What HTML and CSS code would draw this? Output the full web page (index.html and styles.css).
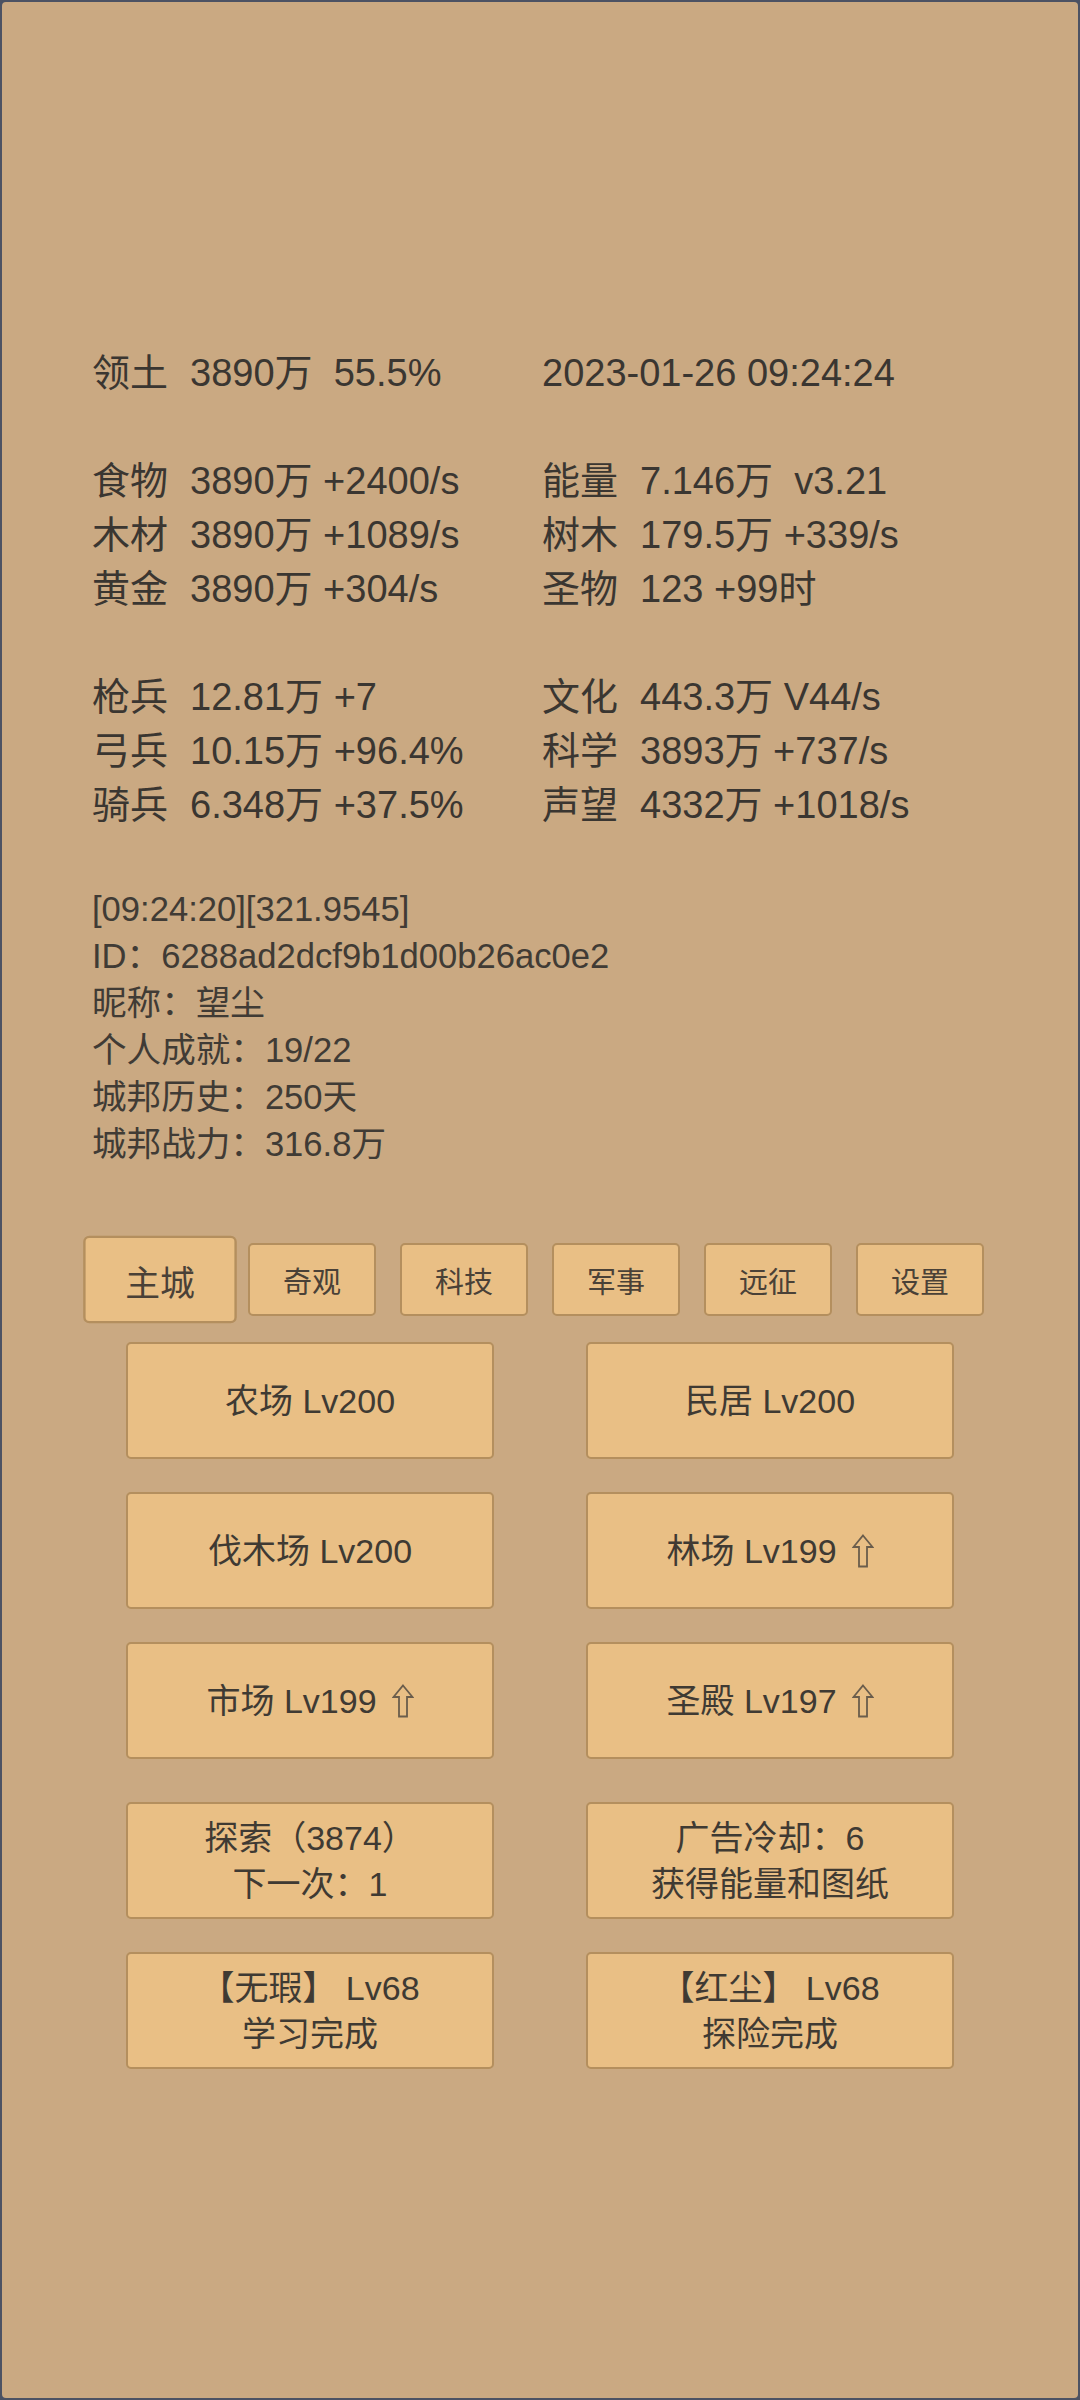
FILE: index.html
```html
<!DOCTYPE html>
<html lang="zh-CN">
<head>
  <meta charset="UTF-8">
  <meta name="viewport" content="width=device-width, initial-scale=1.0">
  <title>城邦</title>
  <link rel="stylesheet" href="styles.css">
</head>
<body>
  <div class="screen">
    <!-- 资源一览 -->
    <div class="stats">
      <div class="stat"><span class="k">领土</span><span class="v">3890万  55.5%</span></div>
      <div class="stat"><span class="v">2023-01-26 09:24:24</span></div>
      <div class="blank"></div>

      <div class="stat"><span class="k">食物</span><span class="v">3890万 +2400/s</span></div>
      <div class="stat"><span class="k">能量</span><span class="v">7.146万  v3.21</span></div>
      <div class="stat"><span class="k">木材</span><span class="v">3890万 +1089/s</span></div>
      <div class="stat"><span class="k">树木</span><span class="v">179.5万 +339/s</span></div>
      <div class="stat"><span class="k">黄金</span><span class="v">3890万 +304/s</span></div>
      <div class="stat"><span class="k">圣物</span><span class="v">123 +99时</span></div>
      <div class="blank"></div>

      <div class="stat"><span class="k">枪兵</span><span class="v">12.81万 +7</span></div>
      <div class="stat"><span class="k">文化</span><span class="v">443.3万 V44/s</span></div>
      <div class="stat"><span class="k">弓兵</span><span class="v">10.15万 +96.4%</span></div>
      <div class="stat"><span class="k">科学</span><span class="v">3893万 +737/s</span></div>
      <div class="stat"><span class="k">骑兵</span><span class="v">6.348万 +37.5%</span></div>
      <div class="stat"><span class="k">声望</span><span class="v">4332万 +1018/s</span></div>
    </div>

    <!-- 玩家信息 -->
    <div class="info">
      <p>[09:24:20][321.9545]</p>
      <p>ID：6288ad2dcf9b1d00b26ac0e2</p>
      <p>昵称：望尘</p>
      <p>个人成就：19/22</p>
      <p>城邦历史：250天</p>
      <p>城邦战力：316.8万</p>
    </div>

    <!-- 页签 -->
    <div class="tabs">
      <div class="tab active">主城</div>
      <div class="tab">奇观</div>
      <div class="tab">科技</div>
      <div class="tab">军事</div>
      <div class="tab">远征</div>
      <div class="tab">设置</div>
    </div>

    <!-- 建筑 -->
    <div class="grid">
      <div class="btn">农场 Lv200</div>
      <div class="btn">民居 Lv200</div>
      <div class="btn">伐木场 Lv200</div>
      <div class="btn">林场 Lv199 <svg class="up" viewBox="0 0 22 34"><path d="M11 1.5 L20.5 13 H15 V32.5 H7 V13 H1.5 Z"/></svg></div>
      <div class="btn">市场 Lv199 <svg class="up" viewBox="0 0 22 34"><path d="M11 1.5 L20.5 13 H15 V32.5 H7 V13 H1.5 Z"/></svg></div>
      <div class="btn">圣殿 Lv197 <svg class="up" viewBox="0 0 22 34"><path d="M11 1.5 L20.5 13 H15 V32.5 H7 V13 H1.5 Z"/></svg></div>
    </div>

    <div class="grid actions">
      <div class="btn">探索（3874）<br>下一次：1</div>
      <div class="btn">广告冷却：6<br>获得能量和图纸</div>
      <div class="btn">【无瑕】 Lv68<br>学习完成</div>
      <div class="btn">【红尘】 Lv68<br>探险完成</div>
    </div>
  </div>
</body>
</html>
```

FILE: styles.css
```css
/* 全体 */
body {
  margin: 0;
  background: #4c5263;
  font-family: "Liberation Sans", "Noto Sans CJK SC", sans-serif;
  color: #3a3631;
}
.screen {
  box-sizing: border-box;
  height: 2400px;
  border: 2px solid #4c5263;
  border-radius: 6px;
  background: #caa982;
  padding-top: 344px;
}

/* 资源一览：左右两列 */
.stats {
  display: grid;
  grid-template-columns: 450px 450px;
  padding-left: 90px;
  font-size: 38px;
  line-height: 54px;
}
.blank {
  grid-column: 1 / 3;
  height: 54px;
}
.stat {
  white-space: pre;
}
.stat .k {
  margin-right: 22px;
}

/* 玩家信息 */
.info {
  margin-top: 54px;
  padding-left: 90px;
  font-size: 34.6px;
  line-height: 47px;
  color: #403b35;
}
.info p {
  margin: 0;
}

/* 页签 */
.tabs {
  display: flex;
  justify-content: center;
  gap: 24px;
  margin-top: 75px;
}
.tab {
  box-sizing: border-box;
  width: 128px;
  height: 73px;
  display: flex;
  align-items: center;
  justify-content: center;
  background: #e9bf85;
  border: 2px solid #b48f5e;
  border-radius: 5px;
  font-size: 29px;
  color: #4a4137;
}
.tab.active {
  transform: scale(1.2);
}

/* 按钮 */
.grid {
  display: grid;
  grid-template-columns: 368px 368px;
  grid-auto-rows: 117px;
  column-gap: 92px;
  row-gap: 33px;
  justify-content: center;
  margin-top: 26px;
}
.grid.actions {
  margin-top: 43px;
}
.btn {
  box-sizing: border-box;
  display: flex;
  align-items: center;
  justify-content: center;
  text-align: center;
  background: #e9bf85;
  border: 2px solid #b48f5e;
  border-radius: 5px;
  font-size: 34px;
  line-height: 46px;
  color: #3f3a33;
}
.up {
  width: 22px;
  height: 34px;
  margin-left: 15px;
  fill: none;
  stroke: #6a5d4c;
  stroke-width: 1.8;
}
```
